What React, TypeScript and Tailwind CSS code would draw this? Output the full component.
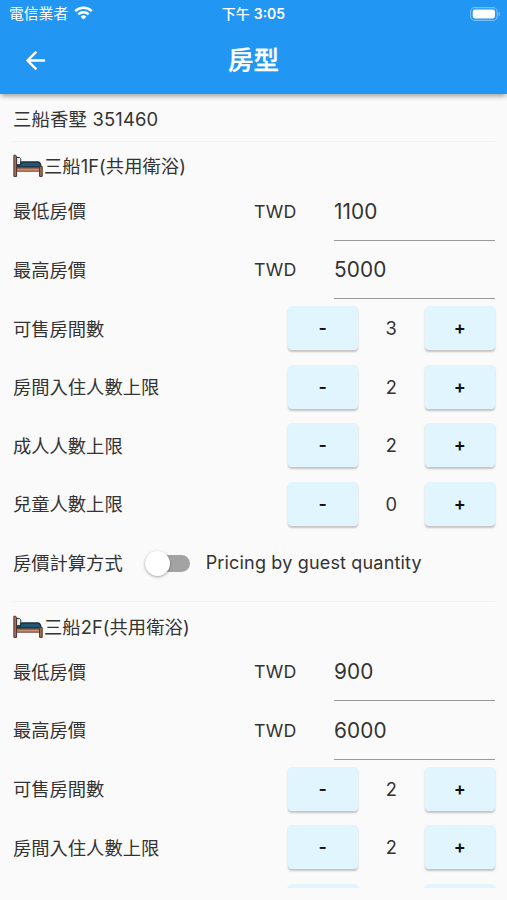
import { useState } from 'react';

type Room = {
  name: string;
  min: string;
  max: string;
  available: number;
  guests: number;
  adults: number;
  children: number;
};

const rooms: Room[] = [
  { name: '三船1F(共用衛浴)', min: '1100', max: '5000', available: 3, guests: 2, adults: 2, children: 0 },
  { name: '三船2F(共用衛浴)', min: '900', max: '6000', available: 2, guests: 2, adults: 2, children: 0 },
];

function App() {
  return (
    <div className="flex h-[900px] w-[507px] flex-col overflow-hidden bg-[#fafafa] font-['Inter','Noto_Sans_CJK_TC',sans-serif] text-[#333]">
      <header className="z-10 h-[94px] shrink-0 bg-[#2196f3] text-white shadow-[0_3px_5px_-1px_rgba(0,0,0,0.38)]">
        <StatusBar />
        <div className="grid h-[66px] grid-cols-[70px_1fr_70px] items-center">
          <button aria-label="Back" className="flex justify-center">
            <BackArrow />
          </button>
          <h1 className="text-center text-[25.5px] leading-none font-medium [-webkit-text-stroke:0.3px]">房型</h1>
        </div>
      </header>

      {/* Scrollable list of room types */}
      <main className="h-[794px] shrink-0 overflow-y-auto pr-[12.5px] pl-[13px] [scrollbar-width:none]">
        <div className="flex h-[38px] items-center pt-[12px] text-[18.4px] leading-none tracking-[0.15px]">
          三船香墅 351460
        </div>
        {rooms.map((room) => (
          <RoomSection key={room.name} room={room} />
        ))}
      </main>
    </div>
  );
}

const StatusBar = () => (
  <div className="grid h-[27px] grid-cols-3 items-center text-[14px] leading-none">
    <div className="flex items-center gap-[6px] pl-[9px]">
      <span className="pt-px text-[14.8px]">電信業者</span>
      <svg width="19" height="14" viewBox="0 0 19 14" fill="none" stroke="currentColor" strokeWidth="2.5">
        <path d="M1.2 5.1a11.8 11.8 0 0 1 16.6 0" />
        <path d="M4.3 8.3a7.4 7.4 0 0 1 10.4 0" />
        <path d="M6.6 10.7a4.1 4.1 0 0 1 5.8 0L9.5 13.6z" fill="currentColor" stroke="none" />
      </svg>
    </div>
    <span className="text-center">
      <span className="font-medium">下午</span> <span className="font-semibold">3:05</span>
    </span>
    <div className="flex justify-end pr-[6px]">
      <svg width="31" height="14" viewBox="0 0 31 14">
        <rect x="0.6" y="0.6" width="26.5" height="12.8" rx="4" fill="none" stroke="white" strokeOpacity="0.4" strokeWidth="1.1" />
        <rect x="2.7" y="2.6" width="22.3" height="8.8" rx="2.3" fill="white" />
        <path d="M28.5 4.8a2.3 2.3 0 0 1 0 4.4z" fill="white" fillOpacity="0.4" />
      </svg>
    </div>
  </div>
);

const BackArrow = () => (
  <svg width="29" height="29" viewBox="0 0 24 24" fill="currentColor">
    <path d="M20 11H7.83l5.59-5.59L12 4l-8 8 8 8 1.41-1.41L7.83 13H20v-2z" />
  </svg>
);

const BedIcon = () => (
  <svg width="30" height="24" viewBox="0 0 30 24" className="shrink-0">
    <path d="M3.5 3.5h2.8c1 0 1.7 1.4 1.5 2.6l-.5 4.7H3.5z" fill="#e5f1f7" stroke="#263640" strokeWidth="1" />
    <path d="M4 13V11.2h3L8.8 8h15.7c2.2 0 3.4 1.8 3.4 5z" fill="#245673" stroke="#182f40" strokeWidth="1.3" />
    <path d="M3 14h25v3.2H3z" fill="#d18c68" stroke="#51372e" strokeWidth="0.9" />
    <path d="M.9 1.2h1.7l1 1.2v20H.9z" fill="#a96f55" stroke="#49332b" strokeWidth="1" />
    <path d="M26.6 12.5h2.6v9.9h-2.6z" fill="#a96f55" stroke="#49332b" strokeWidth="1" />
  </svg>
);

const RoomSection = ({ room }: { room: Room }) => {
  const [byGuest, setByGuest] = useState(false);

  return (
    <section>
      <div className="flex h-[18.5px] items-center">
        <hr className="w-full border-t border-[#f2f2f2]" />
      </div>
      <h2 className="flex h-[31.8px] items-center text-[18.3px] leading-none font-normal">
        <BedIcon />
        <span className="ml-px tracking-[0.07px]">{room.name}</span>
      </h2>
      <PriceRow label="最低房價" value={room.min} />
      <PriceRow label="最高房價" value={room.max} />
      <CounterRow label="可售房間數" initial={room.available} />
      <CounterRow label="房間入住人數上限" initial={room.guests} />
      <CounterRow label="成人人數上限" initial={room.adults} />
      <CounterRow label="兒童人數上限" initial={room.children} />
      <div className="flex h-[58.6px] items-center text-[18.3px] leading-none">
        <span>房價計算方式</span>
        <button
          role="switch"
          aria-checked={byGuest}
          aria-label="房價計算方式"
          onClick={() => setByGuest(!byGuest)}
          className="ml-[22.5px] flex h-[25px] w-[44.5px] items-center"
        >
          <span className={`flex h-[17px] w-full items-center rounded-full ${byGuest ? 'justify-end bg-[#90caf9]' : 'bg-[#a3a3a3]'}`}>
            <span className="size-[25px] shrink-0 rounded-full bg-white shadow-[0_1px_3px_rgba(0,0,0,0.35)]" />
          </span>
        </button>
        <span className="ml-[16px] text-[18px] tracking-[0.17px]">Pricing by guest quantity</span>
      </div>
    </section>
  );
};

const PriceRow = ({ label, value }: { label: string; value: string }) => (
  <div className="flex h-[58.6px] items-center text-[18.3px] leading-none">
    <span className="w-[241px]">{label}</span>
    <span className="w-[80px] text-[17.8px] tracking-[0.2px]">TWD</span>
    <input
      defaultValue={value}
      className="h-full min-w-0 flex-1 border-b border-[#999] bg-transparent text-[20.8px] tracking-[0.1px] outline-none"
    />
  </div>
);

const CounterRow = ({ label, initial }: { label: string; initial: number }) => {
  const [count, setCount] = useState(initial);

  return (
    <div className="flex h-[58.6px] items-center text-[18.3px] leading-none">
      <span className="flex-1">{label}</span>
      <StepButton label="-" onClick={() => setCount(Math.max(0, count - 1))} />
      <span className="w-[67.5px] pb-px text-center">{count}</span>
      <StepButton label="+" onClick={() => setCount(count + 1)} />
    </div>
  );
};

const StepButton = ({ label, onClick }: { label: string; onClick: () => void }) => (
  <button
    onClick={onClick}
    className="mb-px h-[44px] w-[69.5px] rounded-[4px] bg-[#e1f5fe] text-[18px] font-semibold text-[#111] shadow-[0_2px_2px_rgba(0,0,0,0.22)]"
  >
    {label}
  </button>
);

export default App;
